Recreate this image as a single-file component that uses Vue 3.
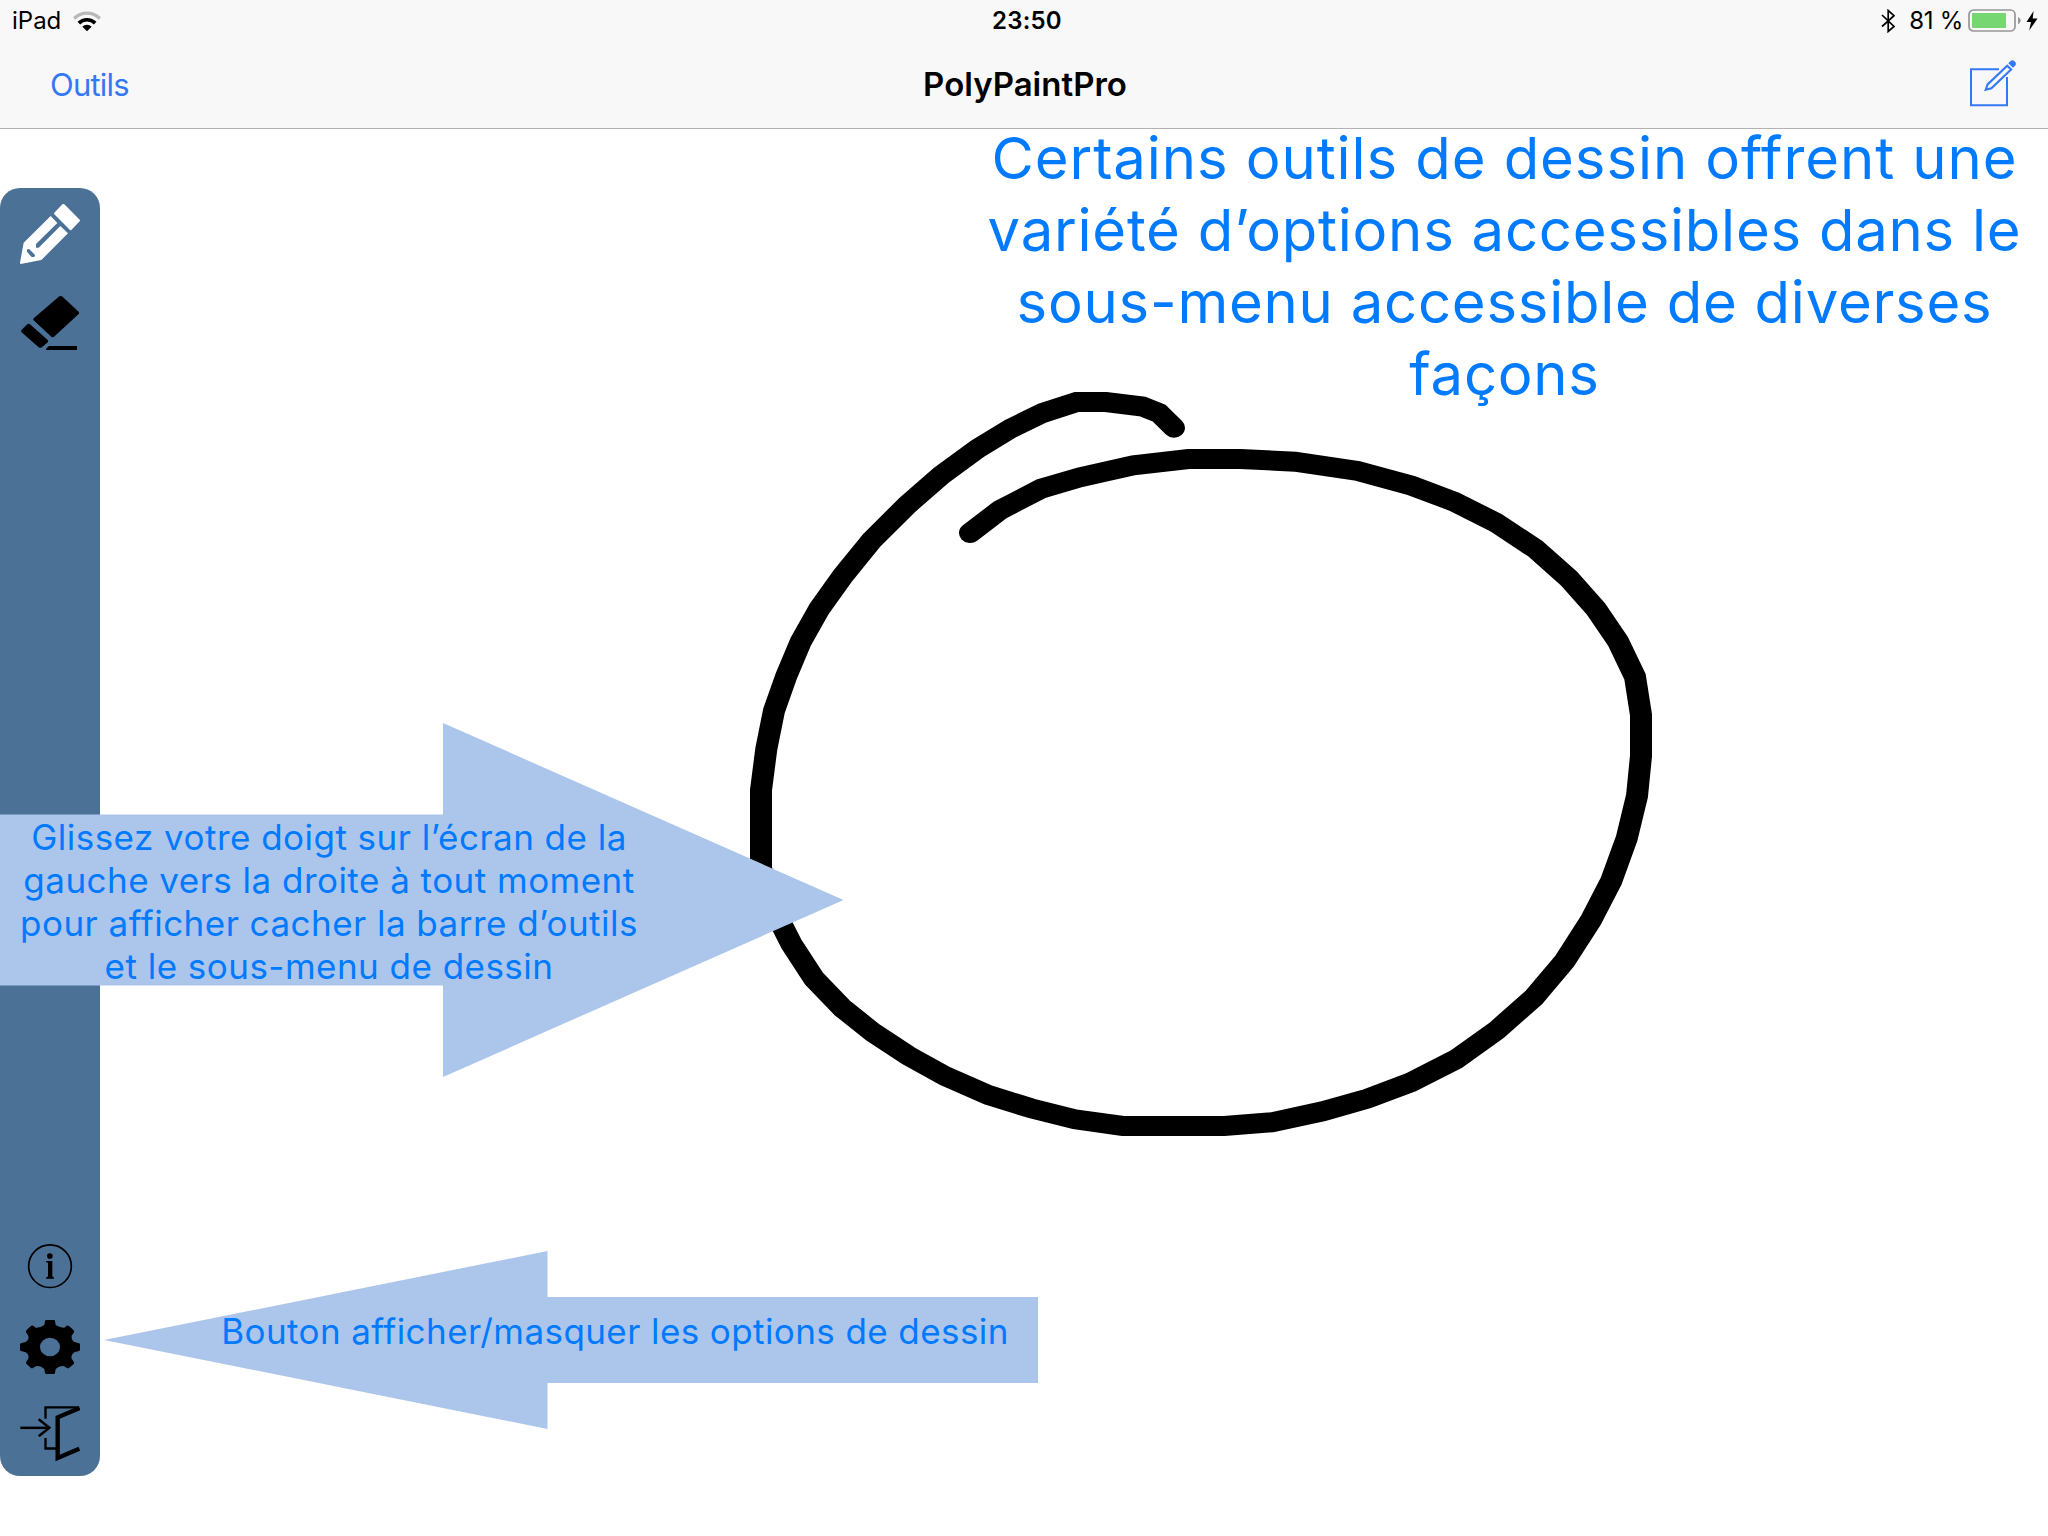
<script setup>
// Horizontal stretch of the drawing surface
const stretch = 1.1

const stroke = [
  [970, 533], [1000, 510], [1041, 488.7], [1080, 477.3], [1133.3, 465.3], [1188.3, 459],
  [1240.7, 459], [1295, 461.7], [1357.7, 471], [1411.7, 485.7], [1454.3, 501.7],
  [1496, 522.7], [1535.3, 548.7], [1568.7, 578.3], [1596, 609], [1618, 641.3],
  [1635, 676.7], [1641, 715], [1641, 756], [1637, 796], [1626.7, 838.3], [1611.3, 880.7],
  [1591, 920], [1564.7, 961], [1534, 997.3], [1496.7, 1030.3], [1456, 1059.3],
  [1411, 1082.3], [1367.3, 1098.7], [1322.7, 1111.3], [1271.7, 1122.3], [1224.3, 1126],
  [1122.7, 1126], [1075, 1119.3], [1031, 1108.3], [988.3, 1095], [945, 1076],
  [908.3, 1055.7], [873.3, 1032.7], [842.7, 1008.3], [814, 978.7], [791.5, 944],
  [770, 902], [761, 868], [761, 790], [766.3, 749], [774, 710.7], [786.3, 676],
  [800.7, 641.7], [819.3, 608.7], [842.7, 576], [871.5, 540.5], [907.5, 504.7],
  [941, 475.5], [977.5, 448.7], [1010.7, 428.5], [1042.7, 413], [1076.5, 402],
  [1106, 402], [1142.5, 406.5], [1159, 413], [1174, 427.7],
]
const points = stroke.map(([x, y]) => `${(x / stretch).toFixed(2)},${y - 129}`).join(' ')

const headline = [
  'Certains outils de dessin offrent une',
  'variété d’options accessibles dans le',
  'sous-menu accessible de diverses',
  'façons',
]
const swipe = [
  'Glissez votre doigt sur l’écran de la',
  'gauche vers la droite à tout moment',
  'pour afficher cacher la barre d’outils',
  'et le sous-menu de dessin',
]
</script>

<template>
  <div class="screen">
    <header class="bar">
      <div class="status">
        <div class="left">
          <span class="carrier">iPad</span>
          <svg class="wifi" width="28" height="21" viewBox="219 29 84 63">
            <path d="M222.500 51.500A54.500 54.500 0 0 1 299.500 51.500" fill="none" stroke="#b9b9b9" stroke-width="10" />
            <path d="M236.500 65.500A34.700 34.700 0 0 1 285.500 65.500" fill="none" stroke="#000" stroke-width="11" />
            <path d="M261 90L247 76A19.800 19.800 0 0 1 275 76Z" />
          </svg>
        </div>
        <span class="clock">23:50</span>
        <div class="right">
          <svg class="bt" width="14" height="24" viewBox="0 0 14 24">
            <path d="M1 6L13 17.500L7.200 22.500V1.500L13 6.700L1 17.500" fill="none" stroke="#000" stroke-width="1.700" />
          </svg>
          <span class="pct">81 %</span>
          <svg class="battery" width="53" height="24" viewBox="0 0 53 24">
            <rect x="1" y="1" width="46" height="21" rx="4.500" fill="none" stroke="#979797" stroke-width="1.700" />
            <rect x="4" y="4" width="34" height="15" rx="0.800" fill="#76d672" />
            <path d="M50 8C53.600 9.400 53.600 13.800 50 15.200Z" fill="#979797" />
          </svg>
          <svg class="bolt" width="12" height="20" viewBox="0 0 12 20">
            <path d="M7.600 0L0.500 11H5L3.200 19.500L11.500 7.600H6.700Z" />
          </svg>
        </div>
      </div>
      <nav class="nav">
        <span class="tools">Outils</span>
        <span class="title">PolyPaintPro</span>
        <svg class="compose" width="48" height="48" viewBox="0 0 48 48" fill="none" stroke="#3478f6">
          <path d="M30 9.200H2V45.200H38V17" stroke-width="2" />
          <path d="M18.600 24.400L16.700 29.800L22.400 28.300L42.100 9.600L38.200 5.700Z" stroke-width="2.100" />
          <path d="M40.200 3.200L42.500 1C45 0.500 47 3 46 5L44 7Z" fill="#3478f6" stroke-width="1.200" />
        </svg>
      </nav>
    </header>

    <main class="canvas">
      <svg class="drawing" width="2048" height="1407" viewBox="0 0 2048 1407">
        <g :transform="`scale(${stretch} 1)`">
          <polyline :points="points" fill="none" stroke="#000" stroke-width="20" stroke-linecap="round" stroke-linejoin="miter" />
        </g>
      </svg>

      <aside class="toolbar">
        <svg class="tool" viewBox="60 72 180 180" fill="#fff">
          <path d="M188 72Q190 71 193 73L239 119Q241 122 239 124L214 150Q212 152 210 150L163 103Q161 100 163 98Z" />
          <path fill-rule="evenodd" d="M152 108L172 129L108 192V203H116L181 138L204 160L124 240L62 252Q60 251 60 248L71 188ZM84 207Q80 208 81 215L94 230Q104 233 105 227Q104 223 103 223L88 208Z" />
        </svg>
        <svg class="tool eraser" viewBox="60 339 180 180">
          <path d="M178 349Q182 347 186 349L236 395Q239 399 236 402L162 470Q158 473 154 470L100 420Q98 417 102 414Z" />
          <path d="M82 433Q86 430 90 433L143 480Q146 484 143 487L126 502Q121 505 116 502L64 456Q62 452 65 449Z" />
          <path d="M147 498H231V510H138Q137 506 147 498Z" />
        </svg>
        <svg class="tool info" viewBox="60 47 180 180">
          <circle cx="150" cy="137.500" r="64" fill="none" stroke="#000" stroke-width="5" />
          <circle cx="149.500" cy="107" r="8.500" />
          <path d="M138 122H157V168L162 172V175H138V172L144 168V128L138 125Z" />
        </svg>
        <svg class="tool gear" viewBox="60 291 180 180">
          <path fill-rule="evenodd" d="M138 300H162Q165 300 165 304L167 315Q182 324 193 323L200 317Q204 315 208 319L221 331Q224 335 221 338L215 347Q213 358 223 366L237 370Q240 371 240 374V389Q240 392 237 393L223 397Q212 405 215 416L221 425Q224 429 221 432L208 443Q204 446 200 444L193 439Q180 435 167 447L165 459Q164 462 161 462H139Q136 462 135 459L133 447Q120 435 107 439L99 444Q96 446 92 443L79 431Q77 428 79 425L85 416Q88 404 77 397L63 393Q60 392 60 389V374Q60 371 63 370L77 366Q88 358 85 347L79 338Q76 335 79 331L92 319Q96 315 100 317L107 323Q118 325 133 315L135 303Q136 300 138 300ZM150 353A30 28 0 1 0 150 409A30 28 0 1 0 150 353Z" />
        </svg>
        <svg class="tool door" viewBox="60 548 180 180" fill="none" stroke="#000">
          <path d="M136.500 595V561H236" stroke-width="7" />
          <path d="M136.500 653V684.500H168" stroke-width="7" />
          <path d="M239 563L173 591V713L238 685" stroke-width="13" />
          <path d="M61 622.500H148" stroke-width="7.500" />
          <path d="M116 597L148 622.500L116 648" stroke-width="7.500" />
        </svg>
      </aside>

      <p class="headline"><span v-for="line in headline" :key="line">{{ line }}</span></p>

      <div class="callout swipe">
        <svg width="844" height="354" viewBox="0 0 844 354">
          <path d="M0 91.500H443V0L843.500 177L443 354V262.500H0Z" fill="#acc5eb" />
        </svg>
        <p><span v-for="line in swipe" :key="line">{{ line }}</span></p>
      </div>

      <div class="callout options">
        <svg width="934" height="178" viewBox="0 0 934 178">
          <path d="M0 89L443.500 0V46H934V132H443.500V178Z" fill="#acc5eb" />
        </svg>
        <p><span>Bouton afficher/masquer les options de dessin</span></p>
      </div>
    </main>
  </div>
</template>

<style>
body {
  background: #fff;
}
</style>

<style scoped>
.screen {
  width: 2048px;
  height: 1536px;
  overflow: hidden;
  background: #fff;
  font-family: Inter, "Liberation Sans", sans-serif;
  display: flex;
  flex-direction: column;
}
.bar {
  box-sizing: border-box;
  height: 129px;
  background: #f8f8f8;
  border-bottom: 1px solid #b2b2b2;
  flex: none;
}
.status {
  height: 41px;
  box-sizing: border-box;
  padding-top: 1px;
  display: grid;
  grid-template-columns: 1fr auto 1fr;
  align-items: center;
  font-size: 24px;
  line-height: 40px;
}
.left,
.right {
  display: flex;
  align-items: center;
}
.left {
  padding-left: 12px;
}
.wifi {
  margin-left: 12px;
}
.clock {
  margin-left: 6px;
  font-weight: 600;
  letter-spacing: 0.2px;
}
.right {
  justify-content: flex-end;
  padding-right: 10px;
}
.bt {
  margin-right: 14px;
}
.pct {
  letter-spacing: -0.3px;
}
.battery {
  margin-left: 5px;
}
.bolt {
  margin-left: 5px;
}
.nav {
  height: 86px;
  display: grid;
  grid-template-columns: 1fr auto 1fr;
  align-items: center;
  font-size: 33px;
}
.tools {
  justify-self: start;
  margin-left: 50px;
  font-size: 31px;
  letter-spacing: -0.8px;
  color: #3478f6;
}
.title {
  margin-left: 2px;
  font-weight: 600;
}
.compose {
  justify-self: end;
  margin-right: 31px;
}
.canvas {
  position: relative;
  flex: 1;
}
.drawing {
  display: block;
}
.toolbar {
  position: absolute;
  left: 0;
  top: 59px;
  width: 100px;
  height: 1288px;
  box-sizing: border-box;
  padding: 16px 0 13px;
  border-radius: 20px;
  background: #4c7196;
  display: flex;
  flex-direction: column;
  align-items: center;
}
.tool {
  width: 60px;
  height: 60px;
  flex: none;
}
.eraser {
  margin-top: 29px;
}
.info {
  margin-top: auto;
}
.gear {
  margin-top: 21px;
}
.door {
  margin-top: 26px;
}
p {
  margin: 0;
  display: flex;
  flex-direction: column;
  align-items: center;
  white-space: nowrap;
  color: #007aff;
}
.headline {
  position: absolute;
  left: 984px;
  top: -7px;
  width: 1041px;
  font-size: 58px;
  line-height: 72px;
  letter-spacing: 0.76px;
}
.headline span:first-child {
  letter-spacing: 0.92px;
}
.callout {
  position: absolute;
}
.callout svg {
  display: block;
}
.callout p {
  position: absolute;
  font-size: 35px;
  line-height: 43px;
  letter-spacing: 0.47px;
}
.swipe {
  left: 0;
  top: 594px;
}
.swipe p {
  left: 0;
  top: 93px;
  width: 658px;
}
.options {
  left: 104px;
  top: 1122px;
}
.options p {
  left: 111px;
  top: 59px;
  width: 800px;
  letter-spacing: 0.41px;
}
</style>
